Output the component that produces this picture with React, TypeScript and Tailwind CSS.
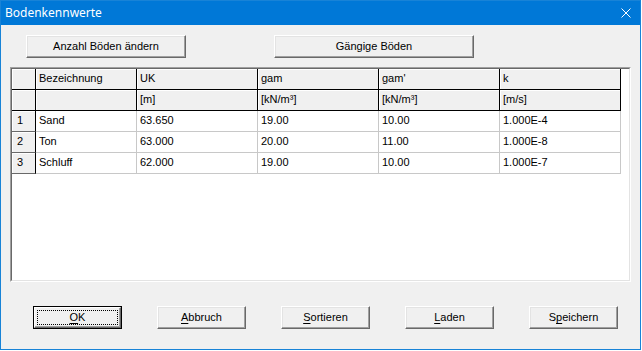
import React from 'react';

const cols = ['w-[24px]', 'w-[101px]', 'w-[121px]', 'w-[121px]', 'w-[121px]', 'w-[121px]'];

const headRow1 = ['Bezeichnung', 'UK', 'gam', "gam'", 'k'];
const headRow2 = ['', '[m]', '[kN/m³]', '[kN/m³]', '[m/s]'];

const rows = [
  ['Sand', '63.650', '19.00', '10.00', '1.000E-4'],
  ['Ton', '63.000', '20.00', '11.00', '1.000E-8'],
  ['Schluff', '62.000', '19.00', '10.00', '1.000E-7'],
];

function WinButton({ w, children }: { w: string; children: React.ReactNode }) {
  return (
    <button
      className={`${w} h-[23px] bg-[#f0f0f0] border border-t-white border-l-white border-r-[#696969] border-b-[#696969] shadow-[inset_-1px_-1px_#a0a0a0,inset_1px_1px_#e3e3e3] flex items-center justify-center text-[11px] text-black`}
    >
      {children}
    </button>
  );
}

function DefaultButton({ children }: { children: React.ReactNode }) {
  return (
    <button className="w-[89px] h-[23px] border border-black bg-[#f0f0f0] text-[11px] text-black">
      <div className="h-full w-full border border-t-white border-l-white border-r-[#696969] border-b-[#696969] shadow-[inset_-1px_-1px_#a0a0a0] p-[2px]">
        <div className="h-full w-full border border-dotted border-black flex items-center justify-center">
          {children}
        </div>
      </div>
    </button>
  );
}

function Acc({ c }: { c: string }) {
  return <span className="underline underline-offset-[2px]">{c}</span>;
}

export default function App() {
  return (
    <div className="w-[642px] h-[351px] bg-white font-['Liberation_Sans',Arial,sans-serif]">
      <div className="w-[641px] h-[350px] border border-[#1883d7] flex flex-col bg-[#f0f0f0]">
        {/* Title bar */}
        <div className="h-[24px] bg-[#0078d7] flex items-center justify-between pl-[4px] pr-[9px]">
          <span className="font-['Noto_Sans',sans-serif] text-[12px] text-white leading-none">
            Bodenkennwerte
          </span>
          <svg width="10" height="10" viewBox="0 0 10 10">
            <path d="M0.5 0.5 L9.5 9.5 M9.5 0.5 L0.5 9.5" stroke="white" strokeWidth="1" fill="none" />
          </svg>
        </div>

        {/* Top buttons */}
        <div className="flex mt-[10px] pl-[25px] gap-[88px]">
          <WinButton w="w-[160px]">Anzahl Böden ändern</WinButton>
          <WinButton w="w-[200px]">Gängige Böden</WinButton>
        </div>

        {/* Table */}
        <div className="mt-[9px] ml-[9px] w-[621px] h-[215px] border border-t-[#a0a0a0] border-l-[#a0a0a0] border-r-white border-b-white">
          <div className="h-full w-full border border-t-[#696969] border-l-[#696969] border-r-[#e3e3e3] border-b-[#e3e3e3] bg-white text-[11px] text-black">
            {[headRow1, headRow2].map((r, i) => (
              <div key={i} className="flex h-[21px]">
                <div className={`${cols[0]} bg-[#f0f0f0] border-r border-b border-black shadow-[inset_1px_1px_white]`} />
                {r.map((t, j) => (
                  <div
                    key={j}
                    className={`${cols[j + 1]} bg-[#f0f0f0] border-r border-b border-black shadow-[inset_1px_1px_white] flex items-center pl-[3px] pb-[1px]`}
                  >
                    {t}
                  </div>
                ))}
              </div>
            ))}
            {rows.map((r, i) => (
              <div key={i} className="flex h-[21px]">
                <div className={`${cols[0]} bg-[#f0f0f0] border-r border-b border-r-black border-b-[#696969] shadow-[inset_1px_1px_white] flex items-center pl-[5px] pb-[1px]`}>
                  {i + 1}
                </div>
                {r.map((t, j) => (
                  <div
                    key={j}
                    className={`${cols[j + 1]} border-r border-b border-[#c8c8c8] flex items-center pl-[3px] pb-[1px]`}
                  >
                    {t}
                  </div>
                ))}
              </div>
            ))}
          </div>
        </div>

        {/* Bottom buttons */}
        <div className="flex mt-[24px] pl-[32px] gap-[35px]">
          <DefaultButton>
            <Acc c="O" />K
          </DefaultButton>
          <WinButton w="w-[89px]">
            <Acc c="A" />bbruch
          </WinButton>
          <WinButton w="w-[89px]">
            <Acc c="S" />ortieren
          </WinButton>
          <WinButton w="w-[89px]">
            <Acc c="L" />aden
          </WinButton>
          <WinButton w="w-[89px]">
            S<Acc c="p" />eichern
          </WinButton>
        </div>
      </div>
    </div>
  );
}
